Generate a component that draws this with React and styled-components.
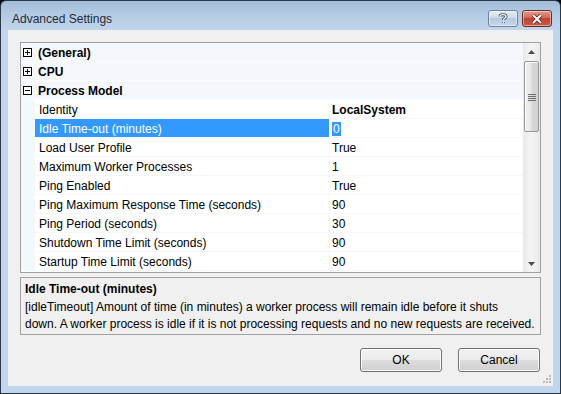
import React from "react";
import styled, { createGlobalStyle } from "styled-components";

const GlobalStyle = createGlobalStyle`
  html, body {
    margin: 0;
    padding: 0;
    background: #000;
  }
  body {
    font-family: "Liberation Sans", Arial, sans-serif;
    font-size: 12px;
    color: #000;
  }
`;

const Window = styled.div`
  width: 561px;
  height: 394px;
  box-sizing: border-box;
  border: 1px solid #2c3848;
  border-radius: 6px 6px 0 0;
  background: linear-gradient(#a3bcd8 0px, #b4cbe4 14px, #c1d5eb 29px, #c1d5eb 100%);
  display: flex;
  flex-direction: column;
  padding: 0 7px 7px 7px;
  overflow: hidden;
`;

const TitleBar = styled.div`
  height: 29px;
  display: flex;
  align-items: flex-start;
  justify-content: space-between;
`;

const Title = styled.div`
  padding: 11px 0 0 4px;
  font-size: 12px;
  color: #1e2a3a;
`;

const CaptionButtons = styled.div`
  display: flex;
  gap: 4px;
  padding: 9px 1px 0 0;
`;

const CaptionButton = styled.div`
  width: 30px;
  height: 17px;
  box-sizing: border-box;
  border: 1px solid ${(p) => (p.$close ? "#6e2b25" : "#6f829e")};
  border-radius: 3px;
  background: ${(p) =>
    p.$close
      ? "linear-gradient(#e3998c 0%, #d2685a 45%, #bf4234 50%, #c9594a 100%)"
      : "linear-gradient(#e6eef8 0%, #ccdaeb 45%, #b6c9e0 50%, #c7d7ea 100%)"};
  box-shadow: inset 0 0 0 1px rgba(255, 255, 255, 0.45);
  display: flex;
  align-items: center;
  justify-content: center;
`;

const Client = styled.div`
  position: relative;
  flex: 1;
  background: #f0f0f0;
  padding: 12px 12px 0 12px;
  display: flex;
  flex-direction: column;
`;

const Grid = styled.div`
  height: 231px;
  box-sizing: border-box;
  border: 1px solid #a0a0a0;
  background: #fff;
  display: flex;
  overflow: hidden;
`;

const Rows = styled.div`
  flex: 1;
  display: flex;
  flex-direction: column;
  overflow: hidden;
`;

const Row = styled.div`
  height: 18px;
  flex: none;
  display: flex;
  align-items: stretch;
  border-bottom: 1px solid ${(p) => (p.$category ? "#fbfcfe" : "#f4f7fc")};
  background: ${(p) => (p.$category ? "#f4f7fc" : "#fff")};
`;

const Gutter = styled.div`
  width: 14px;
  flex: none;
  background: #f4f7fc;
  display: flex;
  align-items: center;
  padding-left: 2px;
  box-sizing: border-box;
`;

const Cell = styled.div`
  box-sizing: border-box;
  height: 18px;
  padding-top: 1px;
  line-height: 18px;
  white-space: nowrap;
  overflow: hidden;
`;

const CategoryName = styled(Cell)`
  padding-left: 3px;
  font-weight: bold;
`;

const Label = styled(Cell)`
  width: 294px;
  flex: none;
  padding-left: 4px;
  background: ${(p) => (p.$selected ? "#3399ff" : "#fff")};
  color: ${(p) => (p.$selected ? "#fff" : "#000")};
`;

const Value = styled(Cell)`
  flex: 1;
  border-left: 1px solid #f4f7fc;
  padding-left: 2px;
  font-weight: ${(p) => (p.$bold ? "bold" : "normal")};
`;

const Selection = styled.span`
  background: #3399ff;
  color: #fff;
  padding: 0 1px;
`;

const Scrollbar = styled.div`
  width: 17px;
  flex: none;
  background: linear-gradient(90deg, #e8e8e8, #f3f3f3 40%, #f3f3f3 60%, #e8e8e8);
  display: flex;
  flex-direction: column;
  align-items: center;
`;

const ArrowBox = styled.div`
  height: 17px;
  width: 17px;
  flex: none;
  display: flex;
  align-items: center;
  justify-content: center;
`;

const Track = styled.div`
  flex: 1;
  width: 100%;
  display: flex;
  flex-direction: column;
  align-items: center;
  padding-top: 1px;
`;

const Thumb = styled.div`
  width: 15px;
  height: 71px;
  box-sizing: border-box;
  border: 1px solid #979797;
  border-radius: 2px;
  background: linear-gradient(90deg, #f1f1f1 0%, #e6e6e6 45%, #d6d6d6 55%, #d2d2d2 100%);
  box-shadow: inset 1px 1px 0 #fff;
  display: flex;
  align-items: center;
  justify-content: center;
`;

const Description = styled.div`
  margin-top: 4px;
  height: 58px;
  box-sizing: border-box;
  border: 1px solid #a0a0a0;
  padding: 3px 4px 0 4px;
  line-height: 17px;
  white-space: nowrap;
  overflow: hidden;
`;

const DescTitle = styled.div`
  font-weight: bold;
  margin-bottom: 1px;
`;

const ButtonRow = styled.div`
  display: flex;
  justify-content: flex-end;
  gap: 16px;
  margin-top: 13px;
  padding-right: 1px;
`;

const Button = styled.button`
  width: 82px;
  height: 24px;
  border: 1px solid #707070;
  border-radius: 3px;
  background: linear-gradient(#f2f2f2 0%, #ebebeb 50%, #dddddd 50%, #cfcfcf 100%);
  box-shadow: inset 0 0 0 1px #fcfcfc;
  font-family: inherit;
  font-size: 12px;
  color: #000;
  padding: 0;
`;

const Grip = styled.svg`
  position: absolute;
  right: 2px;
  bottom: 2px;
`;

const Expander = ({ open }) => (
  <svg width="9" height="9" viewBox="0 0 9 9">
    <rect x="0.5" y="0.5" width="8" height="8" fill="#fff" stroke="#000" />
    <line x1="2" y1="4.5" x2="7" y2="4.5" stroke="#000" />
    {!open && <line x1="4.5" y1="2" x2="4.5" y2="7" stroke="#000" />}
  </svg>
);

const properties = [
  { name: "Identity", value: "LocalSystem", bold: true },
  { name: "Idle Time-out (minutes)", value: "0", selected: true },
  { name: "Load User Profile", value: "True" },
  { name: "Maximum Worker Processes", value: "1" },
  { name: "Ping Enabled", value: "True" },
  { name: "Ping Maximum Response Time (seconds)", value: "90" },
  { name: "Ping Period (seconds)", value: "30" },
  { name: "Shutdown Time Limit (seconds)", value: "90" },
  { name: "Startup Time Limit (seconds)", value: "90" },
];

const App = () => {
  return (
    <>
      <GlobalStyle />
      <Window>
        <TitleBar>
          <Title>Advanced Settings</Title>
          <CaptionButtons>
            <CaptionButton>
              <svg width="10" height="11" viewBox="0 0 10 11">
                <path
                  d="M2 3.5 C2 1 8 1 8 3.5 C8 5.5 5.5 5 5.5 7 M5.5 9 v1"
                  fill="none"
                  stroke="#3b4b63"
                  strokeWidth="3"
                />
                <path
                  d="M2 3.5 C2 1 8 1 8 3.5 C8 5.5 5.5 5 5.5 7 M5.5 9 v1"
                  fill="none"
                  stroke="#fff"
                  strokeWidth="1.4"
                />
              </svg>
            </CaptionButton>
            <CaptionButton $close>
              <svg width="12" height="10" viewBox="0 0 12 10">
                <path d="M2 1 L10 9 M10 1 L2 9" stroke="#5a1d18" strokeWidth="3.4" />
                <path d="M2 1 L10 9 M10 1 L2 9" stroke="#fff" strokeWidth="2" />
              </svg>
            </CaptionButton>
          </CaptionButtons>
        </TitleBar>
        <Client>
          <Grid>
            <Rows>
              <Row $category>
                <Gutter>
                  <Expander />
                </Gutter>
                <CategoryName>(General)</CategoryName>
              </Row>
              <Row $category>
                <Gutter>
                  <Expander />
                </Gutter>
                <CategoryName>CPU</CategoryName>
              </Row>
              <Row $category>
                <Gutter>
                  <Expander open />
                </Gutter>
                <CategoryName>Process Model</CategoryName>
              </Row>
              {properties.map((p) => (
                <Row key={p.name}>
                  <Gutter />
                  <Label $selected={p.selected}>{p.name}</Label>
                  <Value $bold={p.bold}>
                    {p.selected ? <Selection>{p.value}</Selection> : p.value}
                  </Value>
                </Row>
              ))}
            </Rows>
            <Scrollbar>
              <ArrowBox>
                <svg width="7" height="4" viewBox="0 0 7 4">
                  <path d="M3.5 0 L7 4 L0 4 Z" fill="#4d4d4d" />
                </svg>
              </ArrowBox>
              <Track>
                <Thumb>
                  <svg width="8" height="8" viewBox="0 0 8 8">
                    <path d="M0 1.5 H8 M0 3.5 H8 M0 5.5 H8 M0 7.5 H8" stroke="#6e6e6e" />
                  </svg>
                </Thumb>
              </Track>
              <ArrowBox>
                <svg width="7" height="4" viewBox="0 0 7 4">
                  <path d="M0 0 L7 0 L3.5 4 Z" fill="#4d4d4d" />
                </svg>
              </ArrowBox>
            </Scrollbar>
          </Grid>
          <Description>
            <DescTitle>Idle Time-out (minutes)</DescTitle>
            <div>
              [idleTimeout] Amount of time (in minutes) a worker process will remain idle before it
              shuts
              <br />
              down. A worker process is idle if it is not processing requests and no new requests
              are received.
            </div>
          </Description>
          <ButtonRow>
            <Button>OK</Button>
            <Button>Cancel</Button>
          </ButtonRow>
          <Grip width="10" height="10" viewBox="0 0 10 10">
            {[
              [8, 0],
              [8, 3],
              [5, 3],
              [8, 6],
              [5, 6],
              [2, 6],
            ].map(([x, y]) => (
              <rect key={`${x}-${y}`} x={x} y={y + 1} width="2" height="2" fill="#b8b8b8" />
            ))}
          </Grip>
        </Client>
      </Window>
    </>
  );
};

export default App;
